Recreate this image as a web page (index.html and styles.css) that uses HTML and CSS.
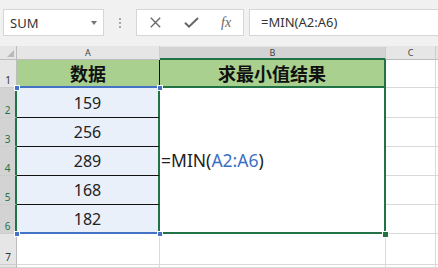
FILE: index.html
```html
<!DOCTYPE html>
<html>
<head>
<meta charset="utf-8">
<link rel="stylesheet" href="styles.css">
</head>
<body>
<div class="toolbar">
  <div class="namebox"><span class="nb-text">SUM</span><span class="caret"></span></div>
  <div class="dots"><i></i><i></i><i></i></div>
  <div class="btns">
    <span class="btn"><svg width="11" height="11" viewBox="0 0 11 11"><path d="M0.8 0.8 L10.2 10.2 M10.2 0.8 L0.8 10.2" stroke="#666" stroke-width="1.3" fill="none"/></svg></span>
    <span class="btn"><svg width="15" height="11" viewBox="0 0 15 11"><path d="M1 5.8 L5 9.6 L14 1" stroke="#666" stroke-width="2" fill="none"/></svg></span>
    <span class="btn fx">fx</span>
  </div>
  <div class="formula">=MIN(A2:A6)</div>
</div>
<div class="sheet">
  <div class="corner"><span class="tri"></span></div>
  <div class="ch">A</div>
  <div class="ch ch-sel">B</div>
  <div class="ch">C</div>
  <div class="ch ch-last"></div>

  <div class="rh">1</div>
  <div class="c hdr a1">数据</div>
  <div class="c hdr b1">求最小值结果</div>
  <div class="c"></div>
  <div class="c last"></div>

  <div class="rh rh-sel">2</div>
  <div class="c num">159</div>
  <div class="c merged"><span class="fk">=MIN(</span><span class="ref">A2:A6</span><span class="fk">)</span></div>
  <div class="c"></div>
  <div class="c last"></div>

  <div class="rh rh-sel">3</div>
  <div class="c num">256</div>
  <div class="c"></div>
  <div class="c last"></div>

  <div class="rh rh-sel">4</div>
  <div class="c num">289</div>
  <div class="c"></div>
  <div class="c last"></div>

  <div class="rh rh-sel">5</div>
  <div class="c num">168</div>
  <div class="c"></div>
  <div class="c last"></div>

  <div class="rh rh-sel">6</div>
  <div class="c num a6">182</div>
  <div class="c"></div>
  <div class="c last"></div>

  <div class="rh">7</div>
  <div class="c"></div>
  <div class="c"></div>
  <div class="c"></div>
  <div class="c last"></div>

  <div class="rh"></div>
  <div class="c"></div>
  <div class="c"></div>
  <div class="c"></div>
  <div class="c last"></div>

  <span class="knob k1"></span>
  <span class="knob k2"></span>
  <span class="knob k3"></span>
  <span class="knob k4"></span>
  <span class="handle"></span>
</div>
</body>
</html>
```

FILE: styles.css
```css
* { box-sizing: border-box; }
html, body { margin: 0; padding: 0; background: #fff; }
body {
  width: 438px;
  height: 268px;
  overflow: hidden;
  font-family: "Noto Sans", "Noto Sans CJK SC", sans-serif;
  color: #222;
}
.toolbar {
  height: 46px;
  background: #f1f1f1;
  display: flex;
  align-items: flex-start;
  padding: 9px 0 0 3px;
}
.namebox {
  width: 101px;
  height: 27px;
  background: #fff;
  border: 1px solid #d6d6d6;
  display: flex;
  align-items: center;
  justify-content: space-between;
  padding: 0 6px 0 6px;
}
.nb-text { font-size: 13px; color: #333; }
.caret {
  width: 0; height: 0;
  border-left: 3.5px solid transparent;
  border-right: 3.5px solid transparent;
  border-top: 4px solid #777;
}
.dots {
  width: 32px;
  height: 27px;
  display: flex;
  flex-direction: column;
  align-items: center;
  justify-content: center;
  gap: 2px;
}
.dots i {
  display: block;
  width: 2px;
  height: 2px;
  background: #aaa;
}
.btns {
  width: 108px;
  height: 27px;
  background: #fff;
  border: 1px solid #d6d6d6;
  display: flex;
  align-items: center;
  padding-left: 12px;
}
.btn {
  display: flex;
  align-items: center;
  justify-content: center;
}
.btn:nth-child(1) { width: 12px; }
.btn:nth-child(2) { width: 16px; margin-left: 22px; }
.fx {
  margin-left: 22px;
  font-family: "Liberation Serif", serif;
  font-style: italic;
  font-size: 14px;
  color: #666;
  height: 25px;
  padding-left: 0;
}
.formula {
  margin-left: 5px;
  flex: 1;
  height: 27px;
  margin-right: -2px;
  background: #fff;
  border: 1px solid #d6d6d6;
  font-size: 13px;
  line-height: 25px;
  padding-left: 11px;
  color: #333;
}
.sheet {
  position: relative;
  display: grid;
  grid-template-columns: 17px 143px 226px 50px 2px;
  grid-template-rows: 14px 28px 30px 29px 29px 29px 29px 31px 1fr;
  height: 222px;
}
.corner {
  background: #e6e6e6;
  border-right: 1px solid #bdbdbd;
  border-bottom: 1px solid #bdbdbd;
  position: relative;
}
.tri {
  position: absolute;
  right: 2px;
  bottom: 2px;
  width: 0; height: 0;
  border-left: 7px solid transparent;
  border-bottom: 7px solid #b9b9b9;
}
.ch {
  background: #e6e6e6;
  border-right: 1px solid #cdcdcd;
  border-bottom: 1px solid #bdbdbd;
  font-size: 9px;
  line-height: 13px;
  text-align: center;
  color: #444;
}
.ch-sel {
  background: #d3d3d3;
  border-top: 1px solid #e6e6e6;
  border-bottom: 2px solid #217346;
  line-height: 11px;
}
.ch-last { border-right: none; }
.rh {
  background: #e6e6e6;
  border-right: 1px solid #bdbdbd;
  border-bottom: 1px solid #cdcdcd;
  font-size: 10px;
  color: #333;
  display: flex;
  align-items: flex-end;
  justify-content: center;
  padding-bottom: 1px;
  line-height: 12px;
}
.rh-sel {
  background: #d3d3d3;
  color: #217346;
  border-right: 2px solid #217346;
}
.c {
  border-right: 1px solid #d9d9d9;
  border-bottom: 1px solid #d9d9d9;
}
.c.last { border-right: none; }
.hdr {
  background: #a9d08e;
  font-family: "Noto Sans CJK SC", sans-serif;
  font-weight: 700;
  font-size: 18px;
  display: flex;
  align-items: center;
  justify-content: center;
  color: #111;
}
.a1 {
  border-right: 1px solid #111;
  border-bottom: 2px solid #4472c4;
}
.b1 {
  border-right: 2px solid #217346;
  border-bottom: 2px solid #217346;
}
.num {
  background: #eaf0fa;
  font-size: 16px;
  display: flex;
  align-items: center;
  justify-content: center;
  border-right: 2px solid #217346;
  border-bottom: 1px solid #111;
  color: #222;
}
.num.a6 { border-bottom: 2px solid #4472c4; }
.merged {
  grid-column: 3;
  grid-row: 3 / span 5;
  border-right: 2px solid #217346;
  border-bottom: 2px solid #217346;
  display: flex;
  align-items: center;
  padding-left: 1px;
  font-size: 17.5px;
  background: #fff;
}
.fk { color: #222; }
.ref { color: #3b6fc4; }
.knob {
  position: absolute;
  width: 6px;
  height: 6px;
  background: #4472c4;
  border: 1px solid #fff;
}
.k1 { left: 14px; top: 39px; }
.k2 { left: 157px; top: 39px; }
.k3 { left: 14px; top: 185px; }
.k4 { left: 157px; top: 185px; }
.handle {
  position: absolute;
  left: 382px;
  top: 185px;
  width: 7px;
  height: 7px;
  background: #217346;
  border: 1px solid #fff;
}
```
